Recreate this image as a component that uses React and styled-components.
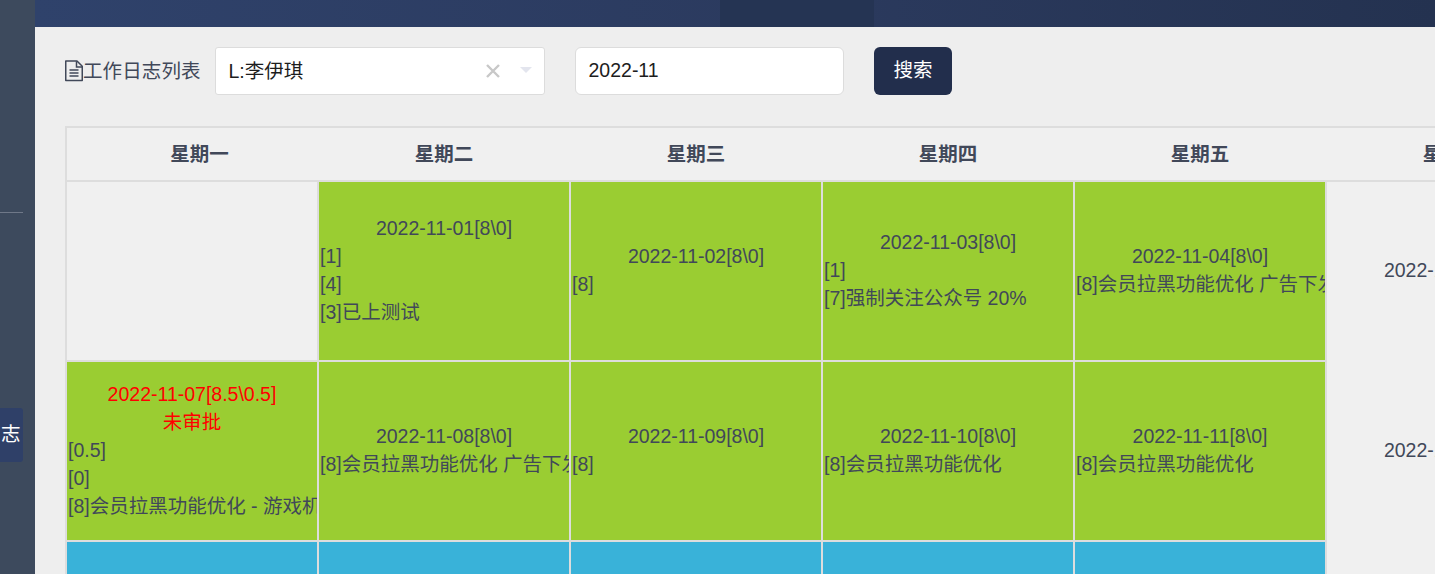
import React from "react";
import styled, { createGlobalStyle } from "styled-components";

const Global = createGlobalStyle`
  * { box-sizing: border-box; }
  body {
    margin: 0;
    overflow: hidden;
    background: #eeeeee;
    color: #414859;
    font: 400 19.5px/28px "Liberation Sans", "Noto Sans CJK SC", sans-serif;
  }
`;

const Page = styled.div`
  display: flex;
  width: 100vw;
  height: 100vh;
  overflow: hidden;
`;

const Sidebar = styled.aside`
  flex: 0 0 35px;
  padding-right: 12px;
  overflow: hidden;
  background: #3d4a5d;
`;

const Divider = styled.div`
  height: 213px;
  border-bottom: 1px solid #6f7888;
`;

const MenuItem = styled.div`
  height: 54px;
  margin-top: 195px;
  padding-left: 1px;
  border-radius: 0 3px 3px 0;
  background: #2f4068;
  color: #fff;
  line-height: 52px;
  white-space: nowrap;
`;

const Main = styled.main`
  flex: 1;
  min-width: 0;
  overflow: hidden;
`;

const TopBar = styled.header`
  display: flex;
  height: 27px;
  padding-left: 685px;
  background: linear-gradient(90deg, #2f426b 0%, #2b3a5e 55%, #243250 100%);
`;

const ActiveTab = styled.div`
  width: 154px;
  background: #253453;
`;

const Toolbar = styled.div`
  display: flex;
  align-items: center;
  height: 48px;
  margin: 20px 0 31px 30px;
`;

const Title = styled.div`
  display: flex;
  align-items: center;
  width: 150px;
  letter-spacing: 0.1px;
  white-space: nowrap;
`;

const Field = styled.div`
  display: flex;
  align-items: center;
  width: ${(p) => p.$width}px;
  height: 48px;
  margin-right: 30px;
  padding: 0 11px 0 12.5px;
  border: 1px solid #dcdcdc;
  border-radius: ${(p) => p.$radius}px;
  background: #fff;
  color: #1d1d1d;
`;

const FieldText = styled.span`
  flex: 1;
  padding-bottom: ${(p) => p.$lift || 0}px;
`;

const SearchButton = styled.button`
  width: 78px;
  height: 48px;
  padding: 0 0 2px;
  border: 0;
  border-radius: 6px;
  background: #222e4c;
  color: #fff;
  font: inherit;
`;

const Calendar = styled.div`
  display: grid;
  grid-template-columns: repeat(7, 252px);
  grid-template-rows: 54px repeat(3, 180px);
  width: 1766px;
  margin-left: 30px;
  border: 2px solid #dddddd;
  background: #f0f0f0;
`;

const HeadCell = styled.div`
  padding: 12px 2px 0 ${(p) => (p.$first ? 15 : 0)}px;
  border-bottom: 2px solid #dddddd;
  font-weight: 700;
  text-align: center;
`;

const fills = { done: "#9acd32", open: "#39b2d9", empty: "#f0f0f0" };

const DayCell = styled.div`
  display: flex;
  flex-direction: column;
  justify-content: center;
  padding: 0 1px ${(p) => (p.$weekend ? 5 : 2)}px;
  overflow: hidden;
  white-space: nowrap;
  border-right: 2px solid #dddddd;
  border-bottom: ${(p) => (p.$weekend ? 0 : 2)}px solid #dddddd;
  background: ${(p) => fills[p.$fill]};
`;

const DateLine = styled.div`
  text-align: center;
  color: ${(p) => (p.$alert ? "#ff0000" : "inherit")};
`;

const LogLine = styled.div`
  text-align: left;
`;

const weekdays = ["星期一", "星期二", "星期三", "星期四", "星期五", "星期六", "星期日"];

const days = [
  { fill: "empty" },
  { fill: "done", date: "2022-11-01[8\\0]", logs: ["[1]", "[4]", "[3]已上测试"] },
  { fill: "done", date: "2022-11-02[8\\0]", logs: ["[8]"] },
  { fill: "done", date: "2022-11-03[8\\0]", logs: ["[1]", "[7]强制关注公众号 20%"] },
  { fill: "done", date: "2022-11-04[8\\0]", logs: ["[8]会员拉黑功能优化 广告下发"] },
  { fill: "empty", weekend: true, date: "2022-11-05[0\\0]" },
  { fill: "empty", weekend: true, date: "2022-11-06[0\\0]" },
  {
    fill: "done",
    date: "2022-11-07[8.5\\0.5]",
    status: "未审批",
    logs: ["[0.5]", "[0]", "[8]会员拉黑功能优化 - 游戏机"],
  },
  { fill: "done", date: "2022-11-08[8\\0]", logs: ["[8]会员拉黑功能优化 广告下发"] },
  { fill: "done", date: "2022-11-09[8\\0]", logs: ["[8]"] },
  { fill: "done", date: "2022-11-10[8\\0]", logs: ["[8]会员拉黑功能优化"] },
  { fill: "done", date: "2022-11-11[8\\0]", logs: ["[8]会员拉黑功能优化"] },
  { fill: "empty", weekend: true, date: "2022-11-12[0\\0]" },
  { fill: "empty", weekend: true, date: "2022-11-13[0\\0]" },
  { fill: "open" },
  { fill: "open" },
  { fill: "open" },
  { fill: "open" },
  { fill: "open" },
  { fill: "empty", weekend: true },
  { fill: "empty", weekend: true },
];

const FileIcon = () => (
  <svg width="18" height="22" viewBox="0 0 18 22" fill="none" stroke="currentColor" strokeWidth="1.5">
    <path d="M.75 1H12L17.25 6.25V20.5H.75Z" strokeLinejoin="round" />
    <path d="M11.5 1.25V7H17M4.5 10H13.5M4.5 13H13.5M4.5 16H13.5" />
  </svg>
);

const ClearIcon = () => (
  <svg width="14" height="14" viewBox="0 0 14 14" stroke="#c8c8c8" strokeWidth="2.4">
    <path d="M1 1L13 13M13 1L1 13" />
  </svg>
);

const Caret = styled.span`
  margin: 0 1px 3px 20px;
  border: 6px solid transparent;
  border-top-color: #e3e5ee;
  border-bottom: 0;
`;

export default function App() {
  return (
    <Page>
      <Global />
      <Sidebar>
        <Divider />
        <MenuItem>志</MenuItem>
      </Sidebar>
      <Main>
        <TopBar>
          <ActiveTab />
        </TopBar>
        <Toolbar>
          <Title>
            <FileIcon />
            工作日志列表
          </Title>
          <Field $width={330} $radius={3}>
            <FieldText>L:李伊琪</FieldText>
            <ClearIcon />
            <Caret />
          </Field>
          <Field $width={269} $radius={6}>
            <FieldText $lift={2}>2022-11</FieldText>
          </Field>
          <SearchButton>搜索</SearchButton>
        </Toolbar>
        <Calendar>
          {weekdays.map((name, i) => (
            <HeadCell key={name} $first={i === 0}>
              {name}
            </HeadCell>
          ))}
          {days.map((day, i) => (
            <DayCell key={i} $fill={day.fill} $weekend={day.weekend}>
              {day.date && <DateLine $alert={!!day.status}>{day.date}</DateLine>}
              {day.status && <DateLine $alert>{day.status}</DateLine>}
              {(day.logs || []).map((log) => (
                <LogLine key={log}>{log}</LogLine>
              ))}
            </DayCell>
          ))}
        </Calendar>
      </Main>
    </Page>
  );
}
